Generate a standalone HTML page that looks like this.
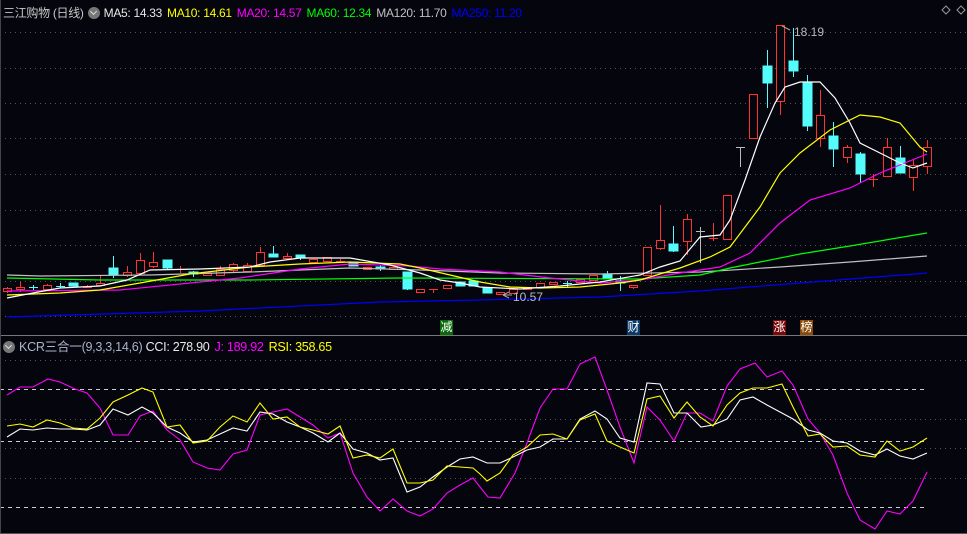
<!DOCTYPE html>
<html><head><meta charset="utf-8"><style>
html,body{margin:0;padding:0;background:#05050e;}
body{width:967px;height:534px;overflow:hidden;position:relative;font-family:"Liberation Sans","Noto Sans CJK SC",sans-serif;}
.h{position:absolute;font-size:12px;white-space:nowrap;letter-spacing:-0.3px}
.h span{margin-right:5px}
.ic{display:inline-block;width:12px;height:12px;border-radius:50%;background:#777;vertical-align:-2px;margin:0 5px 0 2px;position:relative}
.ic:after{content:"";position:absolute;left:3px;top:2px;width:4px;height:4px;border-right:1.5px solid #ddd;border-bottom:1.5px solid #ddd;transform:rotate(45deg)}
.b{position:absolute;top:320px;width:13px;height:15px;font-size:12px;line-height:15px;text-align:center;color:#fff}
</style></head><body>
<svg width="967" height="534" style="position:absolute;left:0;top:0">
<g stroke="#555" stroke-dasharray="1,4" stroke-width="1">
<line x1="0" y1="32.5" x2="967" y2="32.5"/><line x1="0" y1="68.5" x2="967" y2="68.5"/><line x1="0" y1="103.5" x2="967" y2="103.5"/><line x1="0" y1="138.5" x2="967" y2="138.5"/><line x1="0" y1="174.5" x2="967" y2="174.5"/><line x1="0" y1="210.5" x2="967" y2="210.5"/><line x1="0" y1="245.5" x2="967" y2="245.5"/><line x1="0" y1="281.5" x2="967" y2="281.5"/><line x1="0" y1="316.5" x2="967" y2="316.5"/>
<line x1="0" y1="360.5" x2="967" y2="360.5"/><line x1="0" y1="419.5" x2="967" y2="419.5"/><line x1="0" y1="448.5" x2="967" y2="448.5"/><line x1="0" y1="478.5" x2="967" y2="478.5"/>
</g>
<g stroke="#ccc" stroke-dasharray="4,4" stroke-width="1">
<line x1="0" y1="389.5" x2="927" y2="389.5"/><line x1="0" y1="441.5" x2="927" y2="441.5"/><line x1="0" y1="507.5" x2="927" y2="507.5"/>
</g>
<line x1="0" y1="335.5" x2="967" y2="335.5" stroke="#777"/>
<line x1="0.5" y1="0" x2="0.5" y2="534" stroke="#444"/>
<line x1="0" y1="533.5" x2="967" y2="533.5" stroke="#555"/>
<g stroke="#ff3232" fill="#05050e" stroke-width="1.2" shape-rendering="crispEdges">
<line x1="7.5" y1="287" x2="7.5" y2="293"/><rect x="3.5" y="288.5" width="8" height="3"/>
<line x1="20.5" y1="282" x2="20.5" y2="292"/><rect x="16.5" y="287.5" width="8" height="2"/>
<line x1="47.5" y1="284" x2="47.5" y2="290"/><rect x="43.5" y="285.5" width="8" height="4"/>
<line x1="87.5" y1="285" x2="87.5" y2="288"/><line x1="83" y1="287.5" x2="92" y2="287.5"/>
<line x1="100.5" y1="275" x2="100.5" y2="286"/><rect x="96.5" y="283.5" width="8" height="2"/>
<line x1="127.5" y1="266" x2="127.5" y2="277"/><rect x="123.5" y="272.5" width="8" height="3"/>
<line x1="140.5" y1="253" x2="140.5" y2="275"/><rect x="136.5" y="260.5" width="8" height="13"/>
<line x1="153.5" y1="252" x2="153.5" y2="268"/><rect x="149.5" y="262.5" width="8" height="4"/>
<line x1="180.5" y1="266" x2="180.5" y2="273"/><line x1="176" y1="269.5" x2="185" y2="269.5"/>
<rect x="203.5" y="273.5" width="8" height="2"/>
<line x1="220.5" y1="266" x2="220.5" y2="275"/><rect x="216.5" y="269.5" width="8" height="6"/>
<line x1="233.5" y1="263" x2="233.5" y2="273"/><rect x="229.5" y="264.5" width="8" height="6"/>
<line x1="247.5" y1="263" x2="247.5" y2="272"/><rect x="243.5" y="265.5" width="8" height="6"/>
<line x1="260.5" y1="247" x2="260.5" y2="266"/><rect x="256.5" y="252.5" width="8" height="13"/>
<line x1="287.5" y1="253" x2="287.5" y2="259"/><rect x="283.5" y="256.5" width="8" height="2"/>
<rect x="309.5" y="259.5" width="8" height="3"/>
<rect x="323.5" y="257.5" width="8" height="4"/>
<line x1="340.5" y1="259" x2="340.5" y2="263"/><line x1="336" y1="261.5" x2="345" y2="261.5"/>
<rect x="363.5" y="267.5" width="8" height="2"/>
<rect x="389.5" y="267.5" width="8" height="2"/>
<rect x="416.5" y="289.5" width="8" height="3"/>
<line x1="433.5" y1="289" x2="433.5" y2="293"/><line x1="429" y1="289.5" x2="438" y2="289.5"/>
<rect x="443.5" y="285.5" width="8" height="3"/>
<rect x="496.5" y="292.5" width="8" height="2"/>
<rect x="509.5" y="289.5" width="8" height="4"/>
<rect x="523.5" y="287.5" width="8" height="2"/>
<rect x="536.5" y="283.5" width="8" height="4"/>
<rect x="549.5" y="282.5" width="8" height="2"/>
<rect x="576.5" y="279.5" width="8" height="3"/>
<rect x="589.5" y="275.5" width="8" height="5"/>
<line x1="633.5" y1="285" x2="633.5" y2="289"/><rect x="629.5" y="285.5" width="8" height="2"/>
<rect x="643.5" y="247.5" width="8" height="28"/>
<line x1="660.5" y1="205" x2="660.5" y2="250"/><rect x="656.5" y="240.5" width="8" height="8"/>
<line x1="687.5" y1="214" x2="687.5" y2="255"/><rect x="683.5" y="219.5" width="8" height="22"/>
<line x1="713.5" y1="223" x2="713.5" y2="241"/><line x1="709" y1="238.5" x2="718" y2="238.5"/>
<rect x="723.5" y="195.5" width="8" height="44"/>
<rect x="749.5" y="94.5" width="8" height="44"/>
<line x1="780.5" y1="25" x2="780.5" y2="115"/><rect x="776.5" y="25.5" width="8" height="76"/>
<line x1="820.5" y1="90" x2="820.5" y2="147"/><rect x="816.5" y="115.5" width="8" height="23"/>
<line x1="847.5" y1="145" x2="847.5" y2="163"/><rect x="843.5" y="147.5" width="8" height="10"/>
<line x1="873.5" y1="174" x2="873.5" y2="187"/><line x1="869" y1="179.5" x2="878" y2="179.5"/>
<line x1="887.5" y1="138" x2="887.5" y2="177"/><rect x="883.5" y="147.5" width="8" height="29"/>
<line x1="913.5" y1="159" x2="913.5" y2="191"/><rect x="909.5" y="165.5" width="8" height="12"/>
<line x1="927.5" y1="140" x2="927.5" y2="174"/><rect x="923.5" y="147.5" width="8" height="19"/>
</g>
<g stroke="#54fcfc" fill="#54fcfc" stroke-width="1" shape-rendering="crispEdges">
<line x1="33.5" y1="285" x2="33.5" y2="290"/><line x1="29" y1="287.5" x2="38" y2="287.5"/>
<line x1="60.5" y1="283" x2="60.5" y2="288"/><line x1="56" y1="286.5" x2="65" y2="286.5"/>
<rect x="69" y="283" width="9" height="3"/>
<line x1="113.5" y1="256" x2="113.5" y2="278"/><rect x="109" y="268" width="9" height="7"/>
<line x1="167.5" y1="260" x2="167.5" y2="270"/><rect x="163" y="260" width="9" height="8"/>
<line x1="193.5" y1="271" x2="193.5" y2="277"/><rect x="189" y="272" width="9" height="2"/>
<line x1="273.5" y1="246" x2="273.5" y2="257"/><rect x="269" y="254" width="9" height="3"/>
<line x1="300.5" y1="255" x2="300.5" y2="260"/><rect x="296" y="255" width="9" height="3"/>
<rect x="349" y="262" width="9" height="4"/>
<line x1="380.5" y1="265" x2="380.5" y2="271"/><rect x="376" y="267" width="9" height="2"/>
<line x1="407.5" y1="272" x2="407.5" y2="290"/><rect x="403" y="272" width="9" height="17"/>
<rect x="456" y="282" width="9" height="4"/>
<rect x="469" y="281" width="9" height="5"/>
<rect x="483" y="288" width="9" height="5"/>
<line x1="567.5" y1="281" x2="567.5" y2="287"/><line x1="563" y1="283.5" x2="572" y2="283.5"/>
<line x1="607.5" y1="271" x2="607.5" y2="279"/><rect x="603" y="274" width="9" height="5"/>
<line x1="620.5" y1="276" x2="620.5" y2="291"/><rect x="616" y="281" width="9" height="2"/>
<line x1="673.5" y1="226" x2="673.5" y2="252"/><rect x="669" y="244" width="9" height="7"/>
<line x1="767.5" y1="50" x2="767.5" y2="108"/><rect x="763" y="66" width="9" height="17"/>
<line x1="793.5" y1="28" x2="793.5" y2="77"/><rect x="789" y="61" width="9" height="10"/>
<line x1="807.5" y1="75" x2="807.5" y2="131"/><rect x="803" y="83" width="9" height="43"/>
<line x1="833.5" y1="122" x2="833.5" y2="167"/><rect x="829" y="136" width="9" height="13"/>
<line x1="860.5" y1="152" x2="860.5" y2="183"/><rect x="856" y="154" width="9" height="20"/>
<line x1="900.5" y1="146" x2="900.5" y2="173"/><rect x="896" y="158" width="9" height="15"/>
</g>
<g stroke="#bbb" stroke-width="1">
<line x1="700.5" y1="227" x2="700.5" y2="263"/><line x1="696" y1="231.5" x2="705" y2="231.5"/>
<line x1="740.5" y1="147" x2="740.5" y2="167"/><line x1="736" y1="147.5" x2="745" y2="147.5"/>
</g>
<g fill="none" stroke-width="1.2">
<polyline stroke="#0000ff" points="7,317 200,311 380,302 480,300 600,297 700,291 800,283 927,273"/>
<polyline stroke="#c0c0c0" points="7,275 40,276 150,275 250,272 350,268 420,270 500,273 600,274 700,272 780,267 850,262 927,256"/>
<polyline stroke="#00ff00" points="7,278 100,280 250,280 400,278 640,279 700,275 730,268 760,262 800,254 850,246 927,233"/>
<polyline stroke="#ff00ff" points="7,291 120,290 200,282 240,278 300,269 350,264 410,266 440,269 500,272 550,278 600,283 640,280 680,273 720,267 750,253 780,223 810,200 850,188 880,173 927,154"/>
<polyline stroke="#ffff00" points="7,295 60,293 100,290 140,283 190,274 250,267 300,264 350,262 400,264 420,268 450,275 480,282 510,287 540,288 580,287 620,283 640,280 680,268 710,257 730,247 760,207 780,173 800,153 830,130 860,115 880,117 900,123 920,147 927,152"/>
<polyline stroke="#ffffff" points="7,298 33,293 60,288 100,286 127,280 150,270 200,269 250,267 270,262 300,258 350,258 390,265 420,273 440,280 460,283 480,287 520,289 560,286 600,282 640,275 660,267 680,261 700,237 720,235 730,220 745,180 760,137 775,103 785,87 800,82 820,82 835,98 850,123 860,143 880,153 900,163 913,168 927,163"/>
</g>
<path d="M782 26 L790 30" stroke="#aaa" fill="none"/>
<path d="M503 295 l6 -3 M503 295 l6 3 M503 295 h9" stroke="#aaa" fill="none"/>
<text x="794" y="36" fill="#bbb" font-size="12" font-family="Liberation Sans">18.19</text>
<text x="513" y="301" fill="#bbb" font-size="12" font-family="Liberation Sans">10.57</text>
<path d="M946 6 l4 4 l-4 4 l-4 -4z M961 6 l4 4 l-4 4 l-4 -4z" fill="none" stroke="#999"/>
<g fill="none" stroke-width="1.1">
<polyline stroke="#ff00ff" points="7,395 20,387 33,387 48,379 60,382 75,389 87,393 100,408 113,435 128,435 140,416 153,411 167,430 180,440 193,462 207,468 220,470 233,454 247,450 260,415 273,412 287,409 300,417 313,425 328,438 340,433 353,473 367,497 380,511 393,499 407,511 420,516 433,509 447,493 460,485 473,478 480,487 488,497 500,498 515,473 527,443 540,408 553,389 567,389 580,364 595,357 607,390 620,427 634,463 647,407 660,420 674,441 687,413 700,413 713,421 727,386 740,369 755,363 767,377 782,371 793,385 808,419 820,433 833,455 847,493 860,520 875,529 887,511 900,514 913,501 927,472"/>
<polyline stroke="#ffffff" points="7,437 20,429 33,430 47,428 60,429 73,429 87,430 100,425 113,409 128,415 142,407 153,413 167,427 180,433 193,442 207,440 220,434 233,428 247,431 260,412 273,414 287,422 300,427 313,433 328,442 340,433 353,449 367,453 380,460 393,458 407,492 420,487 433,477 447,467 460,459 473,457 480,460 487,463 500,463 513,457 527,450 540,447 553,439 567,439 580,419 595,411 607,419 620,438 634,442 647,383 660,384 674,413 687,413 701,427 713,425 727,419 740,400 753,397 767,405 780,412 793,419 808,430 820,433 833,441 847,443 860,451 875,455 887,449 900,456 913,459 927,453"/>
<polyline stroke="#ffff00" points="7,426 20,424 33,427 47,420 60,423 73,428 87,429 100,418 113,402 128,395 142,388 153,392 167,427 180,425 193,443 207,441 220,427 233,416 247,422 260,403 273,419 287,417 300,427 313,430 328,434 340,426 353,458 367,455 380,458 393,449 407,483 420,483 433,480 447,466 460,467 473,468 480,474 487,481 500,473 513,455 527,447 540,435 553,434 567,439 580,420 595,414 607,441 620,447 634,453 647,399 660,396 674,418 687,402 700,417 713,426 727,405 740,393 753,388 767,388 782,384 793,407 808,436 820,434 833,447 847,446 860,455 875,457 887,441 900,451 913,447 927,438"/>
</g>
</svg>
<div class="h" style="left:3px;top:4px;color:#c8c8c8">三江购物 (日线)<span class="ic" style="margin-left:4px;margin-right:4px"></span><span style="color:#e8e8e8">MA5: 14.33</span><span style="color:#ffff00">MA10: 14.61</span><span style="color:#ff00ff">MA20: 14.57</span><span style="color:#00ff00">MA60: 12.34</span><span style="color:#c0c0c0">MA120: 11.70</span><span style="color:#0000ff">MA250: 11.20</span></div>
<div class="h" style="left:2px;top:336px;color:#aab4c8;font-size:12.6px"><span class="ic" style="margin-left:1px;margin-right:4px"></span>KCR三合一(9,3,3,14,6) <span style="color:#e8e8e8">CCI: 278.90</span><span style="color:#ff00ff">J: 189.92</span><span style="color:#ffff00">RSI: 358.65</span></div>
<div class="b" style="left:440px;background:#0a6a0a">减</div>
<div class="b" style="left:627px;background:#0a3a6a">财</div>
<div class="b" style="left:773px;background:#7a0a0a">涨</div>
<div class="b" style="left:800px;background:#8a4a08">榜</div>
</body></html>
